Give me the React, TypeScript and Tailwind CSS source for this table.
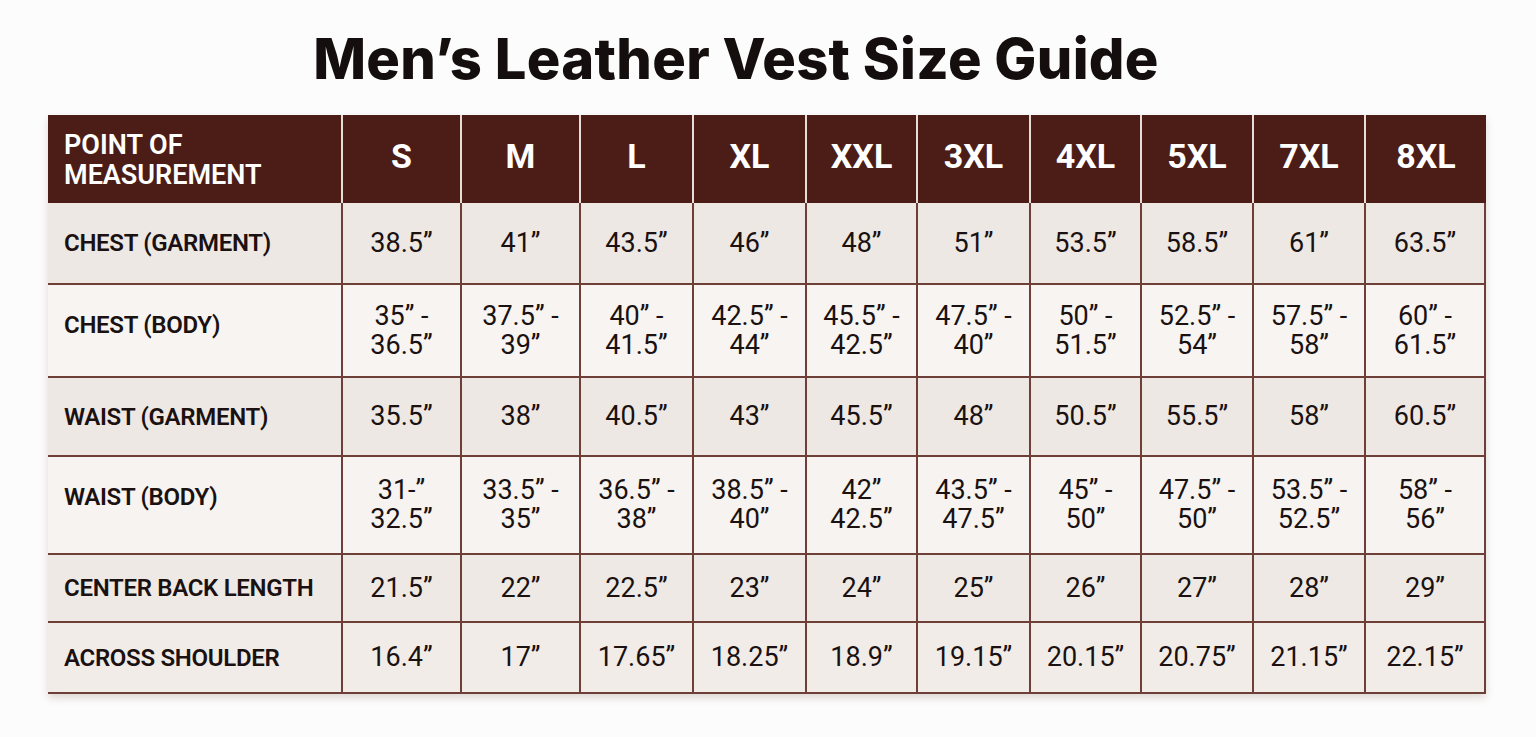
import React from 'react'

const sizes = ['S', 'M', 'L', 'XL', 'XXL', '3XL', '4XL', '5XL', '7XL', '8XL'];

interface row {
    label: string;
    h: string;
    bg: string;
    values: string[][];
}

const rows: row[] = [
    {
        label: 'CHEST (GARMENT)', h: 'h-[82px]', bg: 'bg-[#eee8e4]',
        values: [['38.5”'], ['41”'], ['43.5”'], ['46”'], ['48”'], ['51”'], ['53.5”'], ['58.5”'], ['61”'], ['63.5”']],
    },
    {
        label: 'CHEST (BODY)', h: 'h-[93px]', bg: 'bg-[#f7f4f2]',
        values: [
            ['35” -', '36.5”'], ['37.5” -', '39”'], ['40” -', '41.5”'], ['42.5” -', '44”'], ['45.5” -', '42.5”'],
            ['47.5” -', '40”'], ['50” -', '51.5”'], ['52.5” -', '54”'], ['57.5” -', '58”'], ['60” -', '61.5”'],
        ],
    },
    {
        label: 'WAIST (GARMENT)', h: 'h-[79px]', bg: 'bg-[#eee8e4]',
        values: [['35.5”'], ['38”'], ['40.5”'], ['43”'], ['45.5”'], ['48”'], ['50.5”'], ['55.5”'], ['58”'], ['60.5”']],
    },
    {
        label: 'WAIST (BODY)', h: 'h-[98px]', bg: 'bg-[#f6f3f1]',
        values: [
            ['31-”', '32.5”'], ['33.5” -', '35”'], ['36.5” -', '38”'], ['38.5” -', '40”'], ['42”', '42.5”'],
            ['43.5” -', '47.5”'], ['45” -', '50”'], ['47.5” -', '50”'], ['53.5” -', '52.5”'], ['58” -', '56”'],
        ],
    },
    {
        label: 'CENTER BACK LENGTH', h: 'h-[68px]', bg: 'bg-[#efe9e5]',
        values: [['21.5”'], ['22”'], ['22.5”'], ['23”'], ['24”'], ['25”'], ['26”'], ['27”'], ['28”'], ['29”']],
    },
    {
        label: 'ACROSS SHOULDER', h: 'h-[71px]', bg: 'bg-[#f1ece8]',
        values: [['16.4”'], ['17”'], ['17.65”'], ['18.25”'], ['18.9”'], ['19.15”'], ['20.15”'], ['20.75”'], ['21.15”'], ['22.15”']],
    },
];

const App: React.FC = () => {
    return (
        <div className="w-full h-[737px] bg-[#fdfcfc] font-['Roboto',sans-serif] text-[#1a1110]">
            <div className="flex justify-center pr-[64px] pt-[26px] h-[115px]">
                <h1 className="font-['Inter',sans-serif] font-extrabold text-[56px] leading-[66px] tracking-[0.3px] text-[#140f0e]">
                    Men’s Leather Vest Size Guide
                </h1>
            </div>
            <div className="ml-[48px] w-[1438px] shadow-[0_4px_8px_rgba(80,50,40,0.18)] grid grid-cols-[293px_119px_119px_113px_113px_111px_113px_111px_112px_112px_122px]">
                {/* header */}
                <div className="h-[88px] bg-[#4b1d16] text-white font-semibold text-[27px] leading-[30px] tracking-[0px] flex flex-col justify-center pl-[16px] pt-[2px]">
                    <span>POINT OF</span>
                    <span>MEASUREMENT</span>
                </div>
                {sizes.map((s) => (
                    <div key={s} className="h-[88px] bg-[#4b1d16] border-l-2 border-[#e8dcd8] text-white font-bold text-[34px] flex items-center justify-center pb-[6px]">
                        {s}
                    </div>
                ))}
                {/* body */}
                {rows.map((r) => (
                    <React.Fragment key={r.label}>
                        <div className={`${r.h} ${r.bg} border-b-2 border-[#6d3f37] font-semibold text-[24px] tracking-[-0.3px] pl-[16px] flex ${r.values[0].length > 1 ? 'items-start pt-[22px]' : 'items-center'}`}>
                            {r.label}
                        </div>
                        {r.values.map((v, i) => (
                            <div key={i} className={`${r.h} ${r.bg} border-l-2 border-b-2 border-[#6d3f37] ${i === 9 ? 'border-r-2' : ''} flex flex-col items-center justify-center text-[27px] leading-[29px] tracking-[0px]`}>
                                {v.map((line, j) => (
                                    <span key={j} className="block">{line}</span>
                                ))}
                            </div>
                        ))}
                    </React.Fragment>
                ))}
            </div>
        </div>
    )
}

export default App;
